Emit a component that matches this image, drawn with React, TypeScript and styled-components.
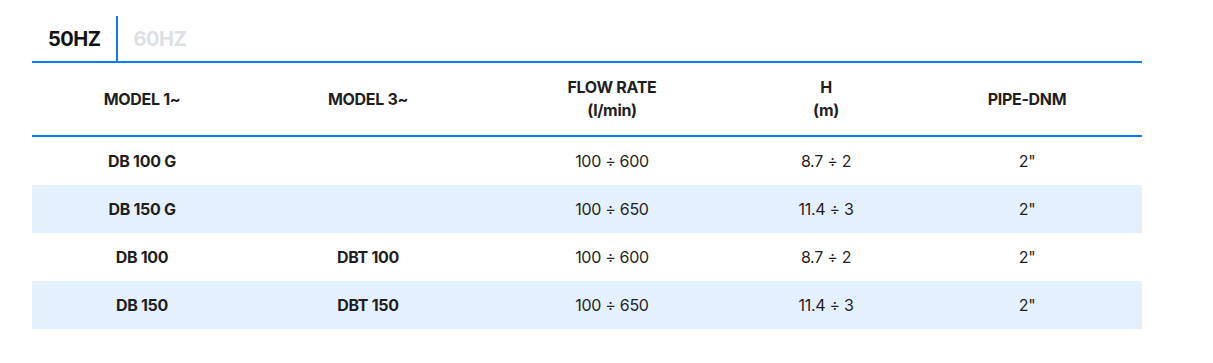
import React from "react";
import styled, { createGlobalStyle } from "styled-components";

const Global = createGlobalStyle`
  html, body { margin: 0; padding: 0; background: #fff; }
  body { font-family: Inter, "Noto Sans", sans-serif; color: #222; }
`;

const Wrap = styled.div`
  padding: 16px 0 0 32px;
  width: 1110px;
`;

const Tabs = styled.div`
  display: flex;
  height: 45px;
  border-bottom: 2px solid #0a7cff;
`;

const Tab = styled.button<{ $active?: boolean; $divider?: boolean }>`
  appearance: none;
  background: none;
  border: none;
  margin: 0;
  padding: 0 ${(p) => (p.$divider ? "15px" : "16px")} 0 16px;
  font-family: inherit;
  font-size: 20px;
  font-weight: 700;
  letter-spacing: -0.5px;
  color: ${(p) => (p.$active ? "#111" : "#dcdfe4")};
  border-right: ${(p) => (p.$divider ? "2px solid #0a7cff" : "none")};
  display: flex;
  align-items: center;
  cursor: pointer;
`;

const Table = styled.table`
  width: 1110px;
  border-collapse: collapse;
  table-layout: fixed;
`;

const Th = styled.th`
  height: 72px;
  padding: 0;
  font-size: 16px;
  font-weight: 700;
  line-height: 23px;
  color: #1f1f22;
  text-align: center;
  border-bottom: 2px solid #0a7cff;
  letter-spacing: -0.3px;
`;

const Tr = styled.tr<{ $alt?: boolean }>`
  background: ${(p) => (p.$alt ? "#e4f0fd" : "#fff")};
`;

const Td = styled.td<{ $bold?: boolean }>`
  height: 48px;
  padding: 0;
  text-align: center;
  font-size: 16px;
  font-weight: ${(p) => (p.$bold ? 700 : 400)};
  color: #1f1f22;
  letter-spacing: -0.3px;
`;

const rows = [
  ["DB 100 G", "", "100 ÷ 600", "8.7 ÷ 2", '2"'],
  ["DB 150 G", "", "100 ÷ 650", "11.4 ÷ 3", '2"'],
  ["DB 100", "DBT 100", "100 ÷ 600", "8.7 ÷ 2", '2"'],
  ["DB 150", "DBT 150", "100 ÷ 650", "11.4 ÷ 3", '2"'],
];

const widths = [220, 232, 256, 172, 230];

export default function App() {
  return (
    <>
      <Global />
      <Wrap>
        <Tabs>
          <Tab $active $divider>50HZ</Tab>
          <Tab>60HZ</Tab>
        </Tabs>
        <Table>
          <colgroup>
            {widths.map((w, i) => (
              <col key={i} style={{ width: w }} />
            ))}
          </colgroup>
          <thead>
            <tr>
              <Th>MODEL 1~</Th>
              <Th>MODEL 3~</Th>
              <Th>
                FLOW RATE
                <br />
                (l/min)
              </Th>
              <Th>
                H
                <br />
                (m)
              </Th>
              <Th>PIPE-DNM</Th>
            </tr>
          </thead>
          <tbody>
            {rows.map((r, i) => (
              <Tr key={i} $alt={i % 2 === 1}>
                <Td $bold>{r[0]}</Td>
                <Td $bold>{r[1]}</Td>
                <Td>{r[2]}</Td>
                <Td>{r[3]}</Td>
                <Td>{r[4]}</Td>
              </Tr>
            ))}
          </tbody>
        </Table>
      </Wrap>
    </>
  );
}
